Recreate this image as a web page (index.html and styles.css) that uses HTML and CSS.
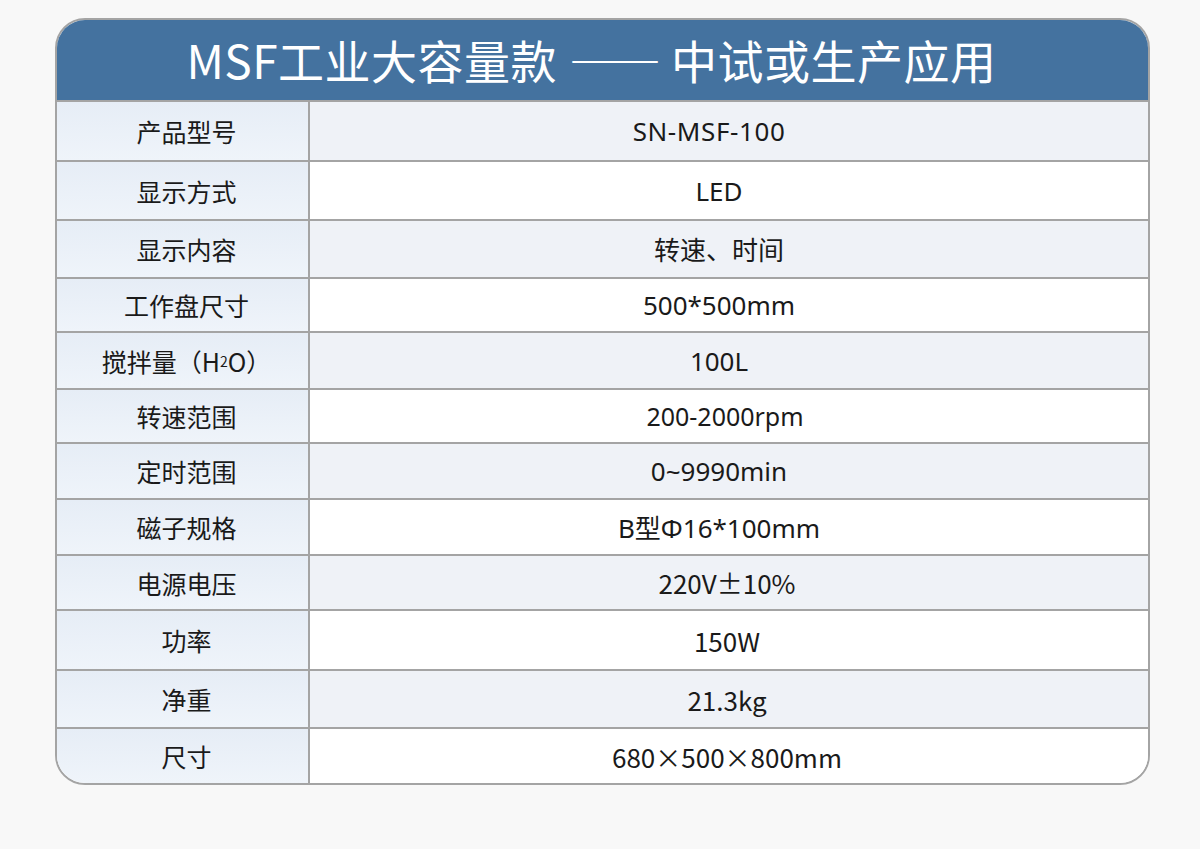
FILE: index.html
```html
<!DOCTYPE html>
<html lang="zh-CN">
<head>
<meta charset="utf-8">
<title>MSF工业大容量款</title>
<link rel="stylesheet" href="styles.css">
</head>
<body>
<div class="card">
  <div class="title">MSF工业大容量款<span class="dash">——</span>中试或生产应用</div>
  <div class="rows">
    <div class="row odd"><div class="label">产品型号</div><div class="value wide">SN-MSF-100</div></div>
    <div class="row"><div class="label">显示方式</div><div class="value">LED</div></div>
    <div class="row odd"><div class="label">显示内容</div><div class="value">转速、时间</div></div>
    <div class="row"><div class="label">工作盘尺寸</div><div class="value">500*500mm</div></div>
    <div class="row odd"><div class="label">搅拌量（H<span class="sub">2</span>O）</div><div class="value">100L</div></div>
    <div class="row"><div class="label">转速范围</div><div class="value tight">200-2000rpm</div></div>
    <div class="row odd"><div class="label">定时范围</div><div class="value">0~9990min</div></div>
    <div class="row"><div class="label">磁子规格</div><div class="value">B型Φ16*100mm</div></div>
    <div class="row odd"><div class="label">电源电压</div><div class="value narrow">220V±10%</div></div>
    <div class="row"><div class="label">功率</div><div class="value narrow">150W</div></div>
    <div class="row odd"><div class="label">净重</div><div class="value narrow">21.3kg</div></div>
    <div class="row"><div class="label">尺寸</div><div class="value narrow">680×500×800mm</div></div>
  </div>
</div>
</body>
</html>
```
FILE: styles.css
```css
html, body {
  margin: 0;
  padding: 0;
  background: #f8f8f8;
}
body {
  width: 1200px;
  height: 849px;
  overflow: hidden;
  font-family: "Noto Sans CJK SC", sans-serif;
  color: #1e1e1e;
}
.card {
  margin: 18px 0 0 55px;
  width: 1095px;
  box-sizing: border-box;
  border: 2px solid #a4a4a4;
  border-radius: 30px;
  overflow: hidden;
  background: #ffffff;
}
.title {
  height: 80px;
  background: #44729f;
  color: #ffffff;
  font-size: 46px;
  line-height: 78px;
  text-align: center;
  padding-right: 22px;
  letter-spacing: 0.5px;
}
.dash {
  margin: 0 10px 0 12px;
  letter-spacing: 0;
}
.row {
  display: grid;
  grid-template-columns: 253px 1fr;
  border-top: 2px solid #a4a4a4;
  height: 58px;
  box-sizing: border-box;
}
.row:nth-child(1) { height: 60px; }
.row:nth-child(2) { height: 59px; }
.row:nth-child(3) { height: 58px; }
.row:nth-child(4) { height: 54px; }
.row:nth-child(5) { height: 57px; }
.row:nth-child(6) { height: 54px; }
.row:nth-child(7) { height: 56px; }
.row:nth-child(8) { height: 56px; }
.row:nth-child(9) { height: 55px; }
.row:nth-child(10) { height: 60px; }
.row:nth-child(11) { height: 58px; }
.row:nth-child(12) { height: 56px; }
.label {
  border-right: 2px solid #a4a4a4;
  background: linear-gradient(#e6edf6, #eff4fa);
  display: flex;
  align-items: center;
  justify-content: center;
  padding-left: 8px;
  font-size: 25px;
  color: #1a1a1a;
}
.sub {
  font-size: 14px;
  vertical-align: -2px;
}
.value {
  display: flex;
  align-items: center;
  justify-content: center;
  padding-right: 20px;
  font-family: "Noto Sans", "Noto Sans CJK SC", sans-serif;
  font-size: 26px;
  color: #1a1a1a;
  background: #ffffff;
}
.value.wide {
  letter-spacing: 0.6px;
  padding-right: 40px;
}
.value.tight {
  font-size: 25px;
  padding-right: 8px;
}
.odd .value {
  background: #eff2f7;
}
.value.narrow {
  font-family: "Noto Sans CJK SC", sans-serif;
  font-size: 26px;
  padding-right: 4px;
}
```
